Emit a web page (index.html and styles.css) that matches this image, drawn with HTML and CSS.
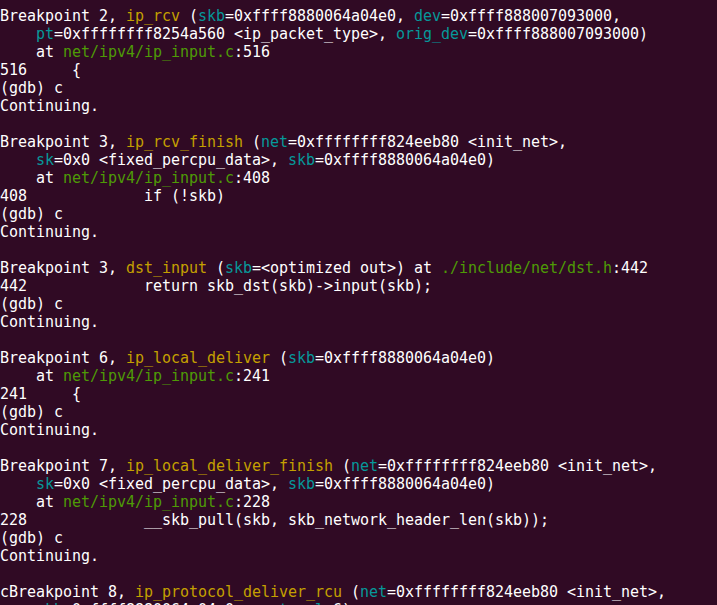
FILE: index.html
```html
<!DOCTYPE html>
<html>
<head>
<meta charset="utf-8">
<link rel="stylesheet" href="styles.css">
</head>
<body>
<pre class="term">Breakpoint 2, <span class="fn">ip_rcv</span> (<span class="ar">skb</span>=0xffff8880064a04e0, <span class="ar">dev</span>=0xffff888007093000,
    <span class="ar">pt</span>=0xffffffff8254a560 &lt;ip_packet_type&gt;, <span class="ar">orig_dev</span>=0xffff888007093000)
    at <span class="fl">net/ipv4/ip_input.c</span>:516
516     {
(gdb) c
Continuing.

Breakpoint 3, <span class="fn">ip_rcv_finish</span> (<span class="ar">net</span>=0xffffffff824eeb80 &lt;init_net&gt;,
    <span class="ar">sk</span>=0x0 &lt;fixed_percpu_data&gt;, <span class="ar">skb</span>=0xffff8880064a04e0)
    at <span class="fl">net/ipv4/ip_input.c</span>:408
408             if (!skb)
(gdb) c
Continuing.

Breakpoint 3, <span class="fn">dst_input</span> (<span class="ar">skb</span>=&lt;optimized out&gt;) at <span class="fl">./include/net/dst.h</span>:442
442             return skb_dst(skb)-&gt;input(skb);
(gdb) c
Continuing.

Breakpoint 6, <span class="fn">ip_local_deliver</span> (<span class="ar">skb</span>=0xffff8880064a04e0)
    at <span class="fl">net/ipv4/ip_input.c</span>:241
241     {
(gdb) c
Continuing.

Breakpoint 7, <span class="fn">ip_local_deliver_finish</span> (<span class="ar">net</span>=0xffffffff824eeb80 &lt;init_net&gt;,
    <span class="ar">sk</span>=0x0 &lt;fixed_percpu_data&gt;, <span class="ar">skb</span>=0xffff8880064a04e0)
    at <span class="fl">net/ipv4/ip_input.c</span>:228
228             __skb_pull(skb, skb_network_header_len(skb));
(gdb) c
Continuing.

cBreakpoint 8, <span class="fn">ip_protocol_deliver_rcu</span> (<span class="ar">net</span>=0xffffffff824eeb80 &lt;init_net&gt;,
    <span class="ar">skb</span>=0xffff8880064a04e0, <span class="ar">protocol</span>=6)</pre>
</body>
</html>
```
FILE: styles.css
```css
html, body {
  margin: 0;
  padding: 0;
  background: #300a24;
  height: 100%;
  overflow: hidden;
}
.term {
  margin: 0;
  padding: 7px 0 0 0;
  font-family: "DejaVu Sans Mono", "Liberation Mono", monospace;
  font-size: 15px;
  letter-spacing: -0.03px;
  line-height: 18px;
  color: #ffffff;
  white-space: pre;
}
.fn { color: #c4a000; }
.ar { color: #06989a; }
.fl { color: #4e9a06; }
```
